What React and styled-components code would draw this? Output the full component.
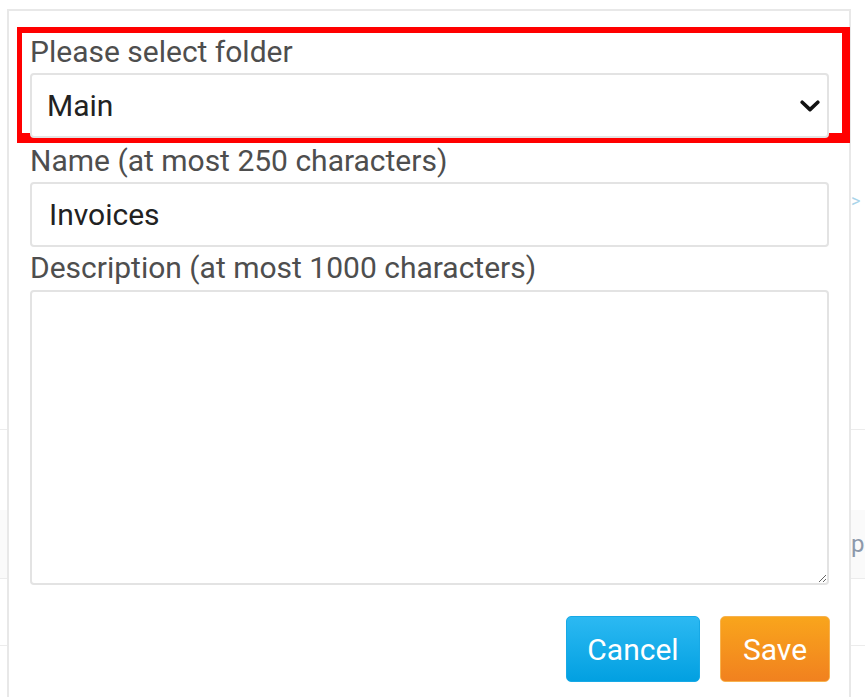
import React from "react";
import styled, { createGlobalStyle } from "styled-components";

const GlobalStyle = createGlobalStyle`
  html, body {
    margin: 0;
    padding: 0;
    background: #ffffff;
  }
  body {
    font-family: Roboto, "Noto Sans", "Liberation Sans", sans-serif;
  }
  * { box-sizing: border-box; }
`;

/* ---------- page behind the dialog ---------- */

const Screen = styled.div`
  position: relative;
  width: 865px;
  height: 697px;
  overflow: hidden;
  background: #fff;
`;

const PageRows = styled.div`
  display: flex;
  flex-direction: column;
`;

const PageRow = styled.div`
  height: ${(p) => p.$h}px;
  display: flex;
  align-items: ${(p) => (p.$align === "top" ? "flex-start" : "center")};
  padding-left: 851px;
  padding-top: ${(p) => p.$padTop || 0}px;
  background: ${(p) => (p.$shade ? "#fafafa" : "#fff")};
  border-bottom: ${(p) => (p.$line ? "1px solid #ececec" : "none")};
  font-size: 24px;
  line-height: 1;
  color: #8d99ab;
  white-space: nowrap;
`;

const Crumb = styled.span`
  color: #a9d4ea;
  font-size: 18px;
`;

/* ---------- dialog ---------- */

const Dialog = styled.div`
  position: absolute;
  left: 7px;
  top: 9px;
  bottom: -20px;
  width: 844px;
  background: #fff;
  border: 2px solid #e8e8e8;
  padding: 22px 20px 0 21px;
  display: flex;
  flex-direction: column;
`;

const FormGroup = styled.div`
  position: relative;
  margin-bottom: ${(p) => p.$after || 0}px;
`;

const Highlight = styled.div`
  position: absolute;
  top: -6px;
  left: -13px;
  right: -21px;
  bottom: -5px;
  border-style: solid;
  border-color: #ff0000;
  border-width: 6px 8px 10px 5px;
  pointer-events: none;
`;

const Label = styled.label`
  display: block;
  font-size: 30px;
  line-height: 38px;
  color: #4e4e4e;
  margin-bottom: ${(p) => p.$gap || 2}px;
`;

const fieldBase = `
  display: block;
  width: 100%;
  border: 2px solid #e3e3e3;
  border-radius: 4px;
  background: #fff;
  font-family: Roboto, "Noto Sans", "Liberation Sans", sans-serif;
  font-size: 30px;
  color: #222;
  outline: none;
`;

const SelectWrap = styled.div`
  position: relative;
`;

const Select = styled.select`
  ${fieldBase}
  height: 65px;
  padding: 0 50px 0 15px;
  appearance: none;
  -webkit-appearance: none;
`;

const Chevron = styled.svg`
  position: absolute;
  right: 9px;
  top: 50%;
  width: 20px;
  height: 12px;
  transform: translateY(-50%);
  pointer-events: none;
`;

const Input = styled.input`
  ${fieldBase}
  height: 65px;
  padding: 0 17px;
`;

const TextArea = styled.textarea`
  ${fieldBase}
  height: 295px;
  padding: 10px 17px;
  resize: vertical;
`;

const Actions = styled.div`
  display: flex;
  justify-content: flex-end;
  gap: 20px;
  margin-top: 31px;
  margin-right: -1px;
`;

const palettes = {
  info: {
    top: "#2cb9f2",
    bottom: "#02a0e1",
    border: "#17a9e6",
  },
  warn: {
    top: "#f9a51c",
    bottom: "#f1811f",
    border: "#f7b24e",
  },
};

const Button = styled.button`
  width: ${(p) => p.$w}px;
  height: 66px;
  border-radius: 5px;
  border: 1px solid ${(p) => palettes[p.$tone].border};
  background: linear-gradient(
    to bottom,
    ${(p) => palettes[p.$tone].top},
    ${(p) => palettes[p.$tone].bottom}
  );
  color: #fff;
  font-family: Roboto, "Noto Sans", "Liberation Sans", sans-serif;
  font-size: 30px;
  padding: 0;
  cursor: pointer;
`;

export default function App() {
  return (
    <>
      <GlobalStyle />
      <Screen>
        <PageRows>
          <PageRow $h={430} $align="top" $padTop={192} $line>
            <Crumb>&gt;</Crumb>
          </PageRow>
          <PageRow $h={80} />
          <PageRow $h={69} $shade $line>
            p
          </PageRow>
          <PageRow $h={67} $line />
          <PageRow $h={60} />
        </PageRows>

        <Dialog>
          <FormGroup $after={4}>
            <Highlight />
            <Label htmlFor="folder">Please select folder</Label>
            <SelectWrap>
              <Select id="folder" defaultValue="main">
                <option value="main">Main</option>
              </Select>
              <Chevron viewBox="0 0 20 12">
                <path
                  d="M2.2 2.2 L10 9.6 L17.8 2.2"
                  fill="none"
                  stroke="#111"
                  strokeWidth="3.6"
                  strokeLinecap="round"
                  strokeLinejoin="round"
                />
              </Chevron>
            </SelectWrap>
          </FormGroup>

          <FormGroup $after={2}>
            <Label htmlFor="name">Name (at most 250 characters)</Label>
            <Input id="name" defaultValue="Invoices" />
          </FormGroup>

          <FormGroup>
            <Label htmlFor="desc" $gap={3}>
              Description (at most 1000 characters)
            </Label>
            <TextArea id="desc" />
          </FormGroup>

          <Actions>
            <Button type="button" $tone="info" $w={134}>
              Cancel
            </Button>
            <Button type="button" $tone="warn" $w={110}>
              Save
            </Button>
          </Actions>
        </Dialog>
      </Screen>
    </>
  );
}
